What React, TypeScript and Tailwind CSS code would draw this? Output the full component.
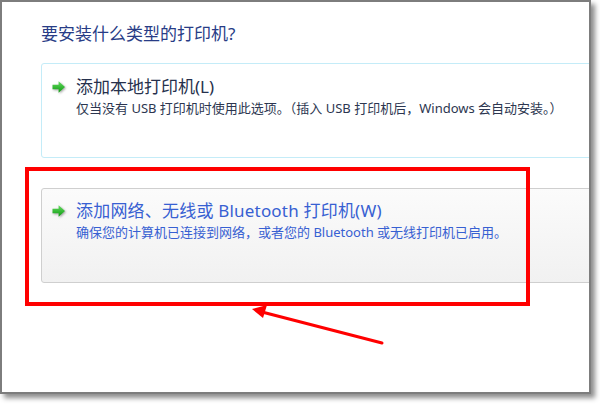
import React from 'react';

const font = { fontFamily: '"Noto Sans", "Noto Sans CJK SC", sans-serif' };

const GreenArrow = () => (
  <svg width="14" height="12" viewBox="0 0 14 12" className="shrink-0 drop-shadow-[1px_1px_1px_rgba(0,0,0,0.35)]">
    <defs>
      <linearGradient id="ga" x1="0" y1="0" x2="0" y2="1">
        <stop offset="0" stopColor="#63dc5f" />
        <stop offset="1" stopColor="#0f9a12" />
      </linearGradient>
    </defs>
    <path d="M0.5 3.8 H6.6 V0.3 L13 6 L6.6 11.7 V8.2 H0.5 Z" fill="url(#ga)" />
  </svg>
);

const Option = ({
  title,
  desc,
  active,
}: {
  title: string;
  desc: string;
  active?: boolean;
}) => (
  <div
    className={
      active
        ? 'w-[570px] h-[95px] rounded-[3px] border border-[#cfcfcf] bg-gradient-to-b from-[#fbfbfb] to-[#f1f1f1] pt-[11px] pl-[10px]'
        : 'w-[570px] h-[95px] rounded-[3px] border border-[#c4ecf8] bg-white pt-[12px] pl-[10px]'
    }
  >
    <div className="flex items-start gap-[10px]">
      <div className="pt-[5px]">
        <GreenArrow />
      </div>
      <div>
        <div
          className={
            active
              ? 'text-[17px] leading-[22px] tracking-[0.2px] text-[#3760d2]'
              : 'text-[17px] leading-[22px] text-[#26304c]'
          }
        >
          {title}
        </div>
        <div
          className={
            active
              ? 'mt-[1px] text-[13px] leading-[18px] text-[#3760d2]'
              : 'mt-[1px] text-[13px] leading-[18px] text-[#2c3650]'
          }
        >
          {desc}
        </div>
      </div>
    </div>
  </div>
);

export default function App() {
  return (
    <div className="relative w-[600px] h-[404px] bg-white overflow-hidden" style={font}>
      {/* dialog frame */}
      <div className="w-[591px] h-[394px] border-2 border-[#7d7d7d] bg-white overflow-hidden shadow-[4px_4px_5px_rgba(0,0,0,0.45)]">
        <div className="pl-[39px] pt-[21px]">
          <h1 className="text-[17px] leading-[22px] font-normal text-[#283c86]">
            要安装什么类型的打印机?
          </h1>
          <div className="mt-[18px] flex flex-col gap-[30px]">
            <Option
              title="添加本地打印机(L)"
              desc="仅当没有 USB 打印机时使用此选项。（插入 USB 打印机后，Windows 会自动安装。）"
            />
            <Option
              active
              title="添加网络、无线或 Bluetooth 打印机(W)"
              desc="确保您的计算机已连接到网络，或者您的 Bluetooth 或无线打印机已启用。"
            />
          </div>
        </div>
      </div>

      {/* red annotation */}
      <div className="absolute left-[25px] top-[167px] w-[505px] h-[139px] border-4 border-[#ff0000]" />
      <svg className="absolute left-0 top-0" width="600" height="404" viewBox="0 0 600 404">
        <line x1="382" y1="343" x2="262" y2="312" stroke="#ff0000" strokeWidth="3" strokeLinecap="round" />
        <path d="M252 309 L267 305 L263 318 Z" fill="#ff0000" />
      </svg>
    </div>
  );
}
